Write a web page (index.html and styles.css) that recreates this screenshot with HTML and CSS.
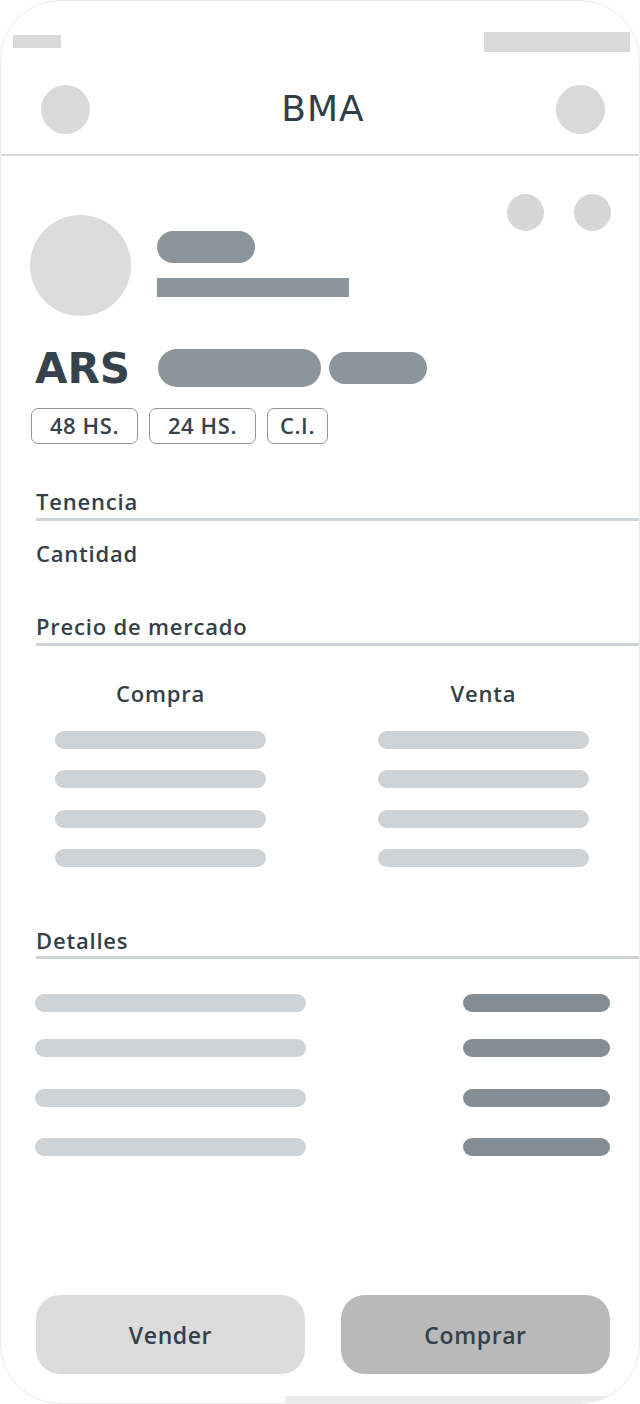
FILE: index.html
```html
<!DOCTYPE html>
<html lang="es">
<head>
<meta charset="utf-8">
<title>BMA</title>
<link rel="stylesheet" href="styles.css">
</head>
<body>
<div class="phone">
  <div class="statusbar">
    <span class="sb-left"></span>
    <span class="sb-right"></span>
  </div>
  <header class="nav">
    <span class="nav-btn"></span>
    <h1 class="nav-title">BMA</h1>
    <span class="nav-btn"></span>
  </header>

  <section class="profile">
    <span class="avatar"></span>
    <div class="profile-info">
      <span class="pill pill-name"></span>
      <span class="bar-sub"></span>
    </div>
    <div class="actions">
      <span class="dot"></span>
      <span class="dot"></span>
    </div>
  </section>

  <div class="price-row">
    <span class="currency">ARS</span>
    <span class="pill pill-price"></span>
    <span class="pill pill-change"></span>
  </div>

  <div class="tags">
    <span class="tag">48 HS.</span>
    <span class="tag">24 HS.</span>
    <span class="tag">C.I.</span>
  </div>

  <h2 class="section-title title-tenencia">Tenencia</h2>
  <div class="label label-cantidad">Cantidad</div>

  <h2 class="section-title title-precio">Precio de mercado</h2>
  <div class="market">
    <div class="market-col">
      <div class="market-head">Compra</div>
      <span class="skel"></span>
      <span class="skel"></span>
      <span class="skel"></span>
      <span class="skel"></span>
    </div>
    <div class="market-col">
      <div class="market-head">Venta</div>
      <span class="skel"></span>
      <span class="skel"></span>
      <span class="skel"></span>
      <span class="skel"></span>
    </div>
  </div>

  <h2 class="section-title title-detalles">Detalles</h2>
  <div class="details">
    <div class="detail-row r1"><span class="d-label"></span><span class="d-value"></span></div>
    <div class="detail-row r2"><span class="d-label"></span><span class="d-value"></span></div>
    <div class="detail-row r3"><span class="d-label"></span><span class="d-value"></span></div>
    <div class="detail-row r4"><span class="d-label"></span><span class="d-value"></span></div>
  </div>

  <div class="buttons">
    <button class="btn btn-sell">Vender</button>
    <button class="btn btn-buy">Comprar</button>
  </div>
  <div class="home-indicator"></div>
</div>
</body>
</html>
```

FILE: styles.css
```css
* { box-sizing: border-box; }

html, body {
  margin: 0;
  padding: 0;
  background: #ffffff;
}

body {
  font-family: "Open Sans", "Noto Sans", sans-serif;
  color: #333f49;
}

.phone {
  width: 640px;
  height: 1404px;
  border: 1px solid #e8e8ef;
  border-radius: 60px;
  overflow: hidden;
  display: flex;
  flex-direction: column;
  background: #ffffff;
}

/* status bar */
.statusbar {
  height: 59px;
  display: flex;
  justify-content: space-between;
  align-items: flex-start;
  padding: 31px 9px 0 12px;
}
.sb-left {
  width: 48px;
  height: 13px;
  margin-top: 3px;
  background: #d9d9d9;
}
.sb-right {
  width: 146px;
  height: 20px;
  background: #d9d9d9;
}

/* navigation */
.nav {
  height: 96px;
  display: flex;
  align-items: center;
  justify-content: space-between;
  padding: 4px 34px 0 40px;
  border-bottom: 2px solid #d6dbdb;
}
.nav-btn {
  width: 49px;
  height: 49px;
  border-radius: 50%;
  background: #d9d9d9;
}
.nav-title {
  margin: 0;
  font-family: "DejaVu Sans", "Open Sans", sans-serif;
  font-weight: 400;
  font-size: 36px;
  line-height: 40px;
  color: #323e48;
  letter-spacing: 1px;
}

/* profile */
.profile {
  display: flex;
  align-items: flex-start;
  padding: 38px 28px 0 29px;
}
.avatar {
  width: 101px;
  height: 101px;
  border-radius: 50%;
  background: #dcdcdc;
  margin-top: 21px;
  flex: none;
}
.profile-info {
  display: flex;
  flex-direction: column;
  align-items: flex-start;
  gap: 15px;
  margin: 37px 0 0 26px;
}
.pill {
  display: block;
  background: #8a969b;
  border-radius: 20px;
}
.pill-name {
  width: 98px;
  height: 32px;
}
.bar-sub {
  display: block;
  width: 192px;
  height: 19px;
  background: #8a969b;
}
.actions {
  margin-left: auto;
  display: flex;
  gap: 30px;
}
.dot {
  width: 37px;
  height: 37px;
  border-radius: 50%;
  background: #d6d6d6;
}

/* price */
.price-row {
  display: flex;
  align-items: center;
  margin: 33px 0 0 34px;
  height: 38px;
}
.currency {
  font-family: "DejaVu Sans", "Open Sans", sans-serif;
  font-weight: 700;
  font-size: 42px;
  line-height: 38px;
  color: #36424c;
  width: 123px;
  padding-top: 2px;
}
.pill-price {
  width: 163px;
  height: 38px;
}
.pill-change {
  width: 98px;
  height: 32px;
  margin-left: 8px;
}

/* tags */
.tags {
  display: flex;
  gap: 11px;
  margin: 21px 0 0 30px;
}
.tag {
  height: 36px;
  border: 1.5px solid #8d979c;
  border-radius: 7px;
  font-size: 22px;
  font-weight: 600;
  line-height: 33px;
  text-align: center;
  color: #36424c;
  letter-spacing: 0.6px;
}
.tag:nth-child(1), .tag:nth-child(2) { width: 107px; }
.tag:nth-child(3) { width: 61px; }

/* sections */
.section-title {
  margin: 0 0 0 35px;
  font-size: 22px;
  font-weight: 600;
  line-height: 26px;
  color: #333f49;
  letter-spacing: 0.8px;
  border-bottom: 3px solid #cdd3d6;
  padding-bottom: 4px;
}
.title-tenencia { margin-top: 44px; }
.label {
  margin-left: 35px;
  font-size: 22px;
  font-weight: 600;
  line-height: 26px;
  letter-spacing: 0.8px;
  color: #333f49;
}
.label-cantidad { margin-top: 19px; }
.title-precio { margin-top: 47px; }

.market {
  display: grid;
  grid-template-columns: 211px 211px;
  column-gap: 112px;
  padding-left: 54px;
  margin-top: 34px;
}
.market-col {
  display: flex;
  flex-direction: column;
  gap: 21.5px;
}
.market-head {
  text-align: center;
  font-size: 22px;
  font-weight: 600;
  line-height: 26px;
  letter-spacing: 0.8px;
  margin-bottom: 3px;
}
.skel {
  display: block;
  height: 18px;
  border-radius: 9px;
  background: #cdd3d6;
}

.title-detalles {
  margin-top: 60px;
  padding-bottom: 3px;
}

.details {
  display: flex;
  flex-direction: column;
  padding: 0 29px 0 34px;
}
.detail-row {
  display: flex;
  justify-content: space-between;
}
.r1 { margin-top: 35px; }
.r2 { margin-top: 27px; }
.r3 { margin-top: 32px; }
.r4 { margin-top: 31px; }
.d-label {
  width: 271px;
  height: 18px;
  border-radius: 9px;
  background: #cdd3d6;
}
.d-value {
  width: 147px;
  height: 18px;
  border-radius: 9px;
  background: #828d94;
}

/* buttons */
.buttons {
  margin-top: auto;
  display: flex;
  gap: 36px;
  padding: 0 29px 0 35px;
}
.btn {
  flex: 1;
  height: 79px;
  border: none;
  border-radius: 24px;
  font-family: "Open Sans", sans-serif;
  font-size: 23px;
  font-weight: 600;
  letter-spacing: 0.6px;
  color: #333f49;
}
.btn-sell { background: #dcdcdc; }
.btn-buy { background: #b9b9b9; }

.home-indicator {
  margin: 22px 0 0 284px;
  width: 340px;
  height: 7px;
  background: #ececec;
  flex: none;
}
```
